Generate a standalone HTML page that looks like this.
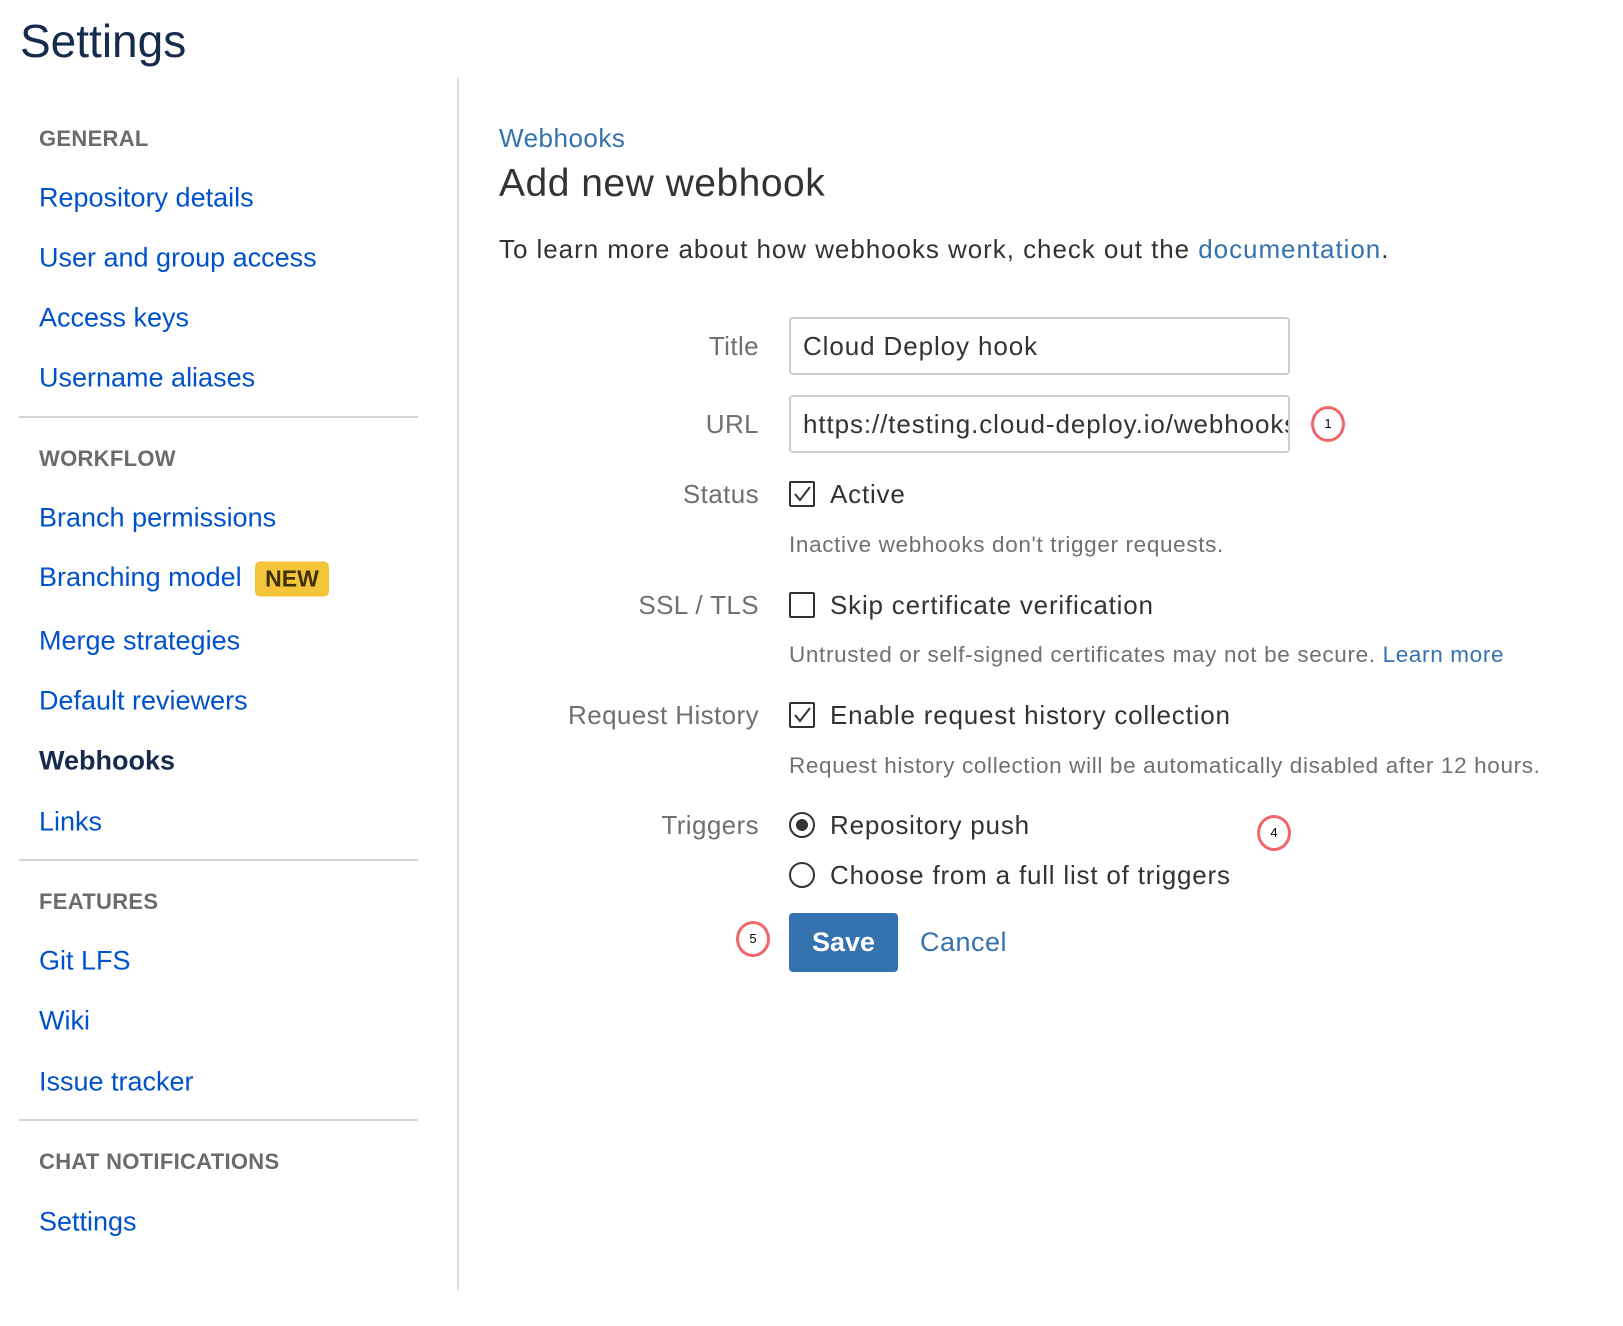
<!DOCTYPE html>
<html><head><meta charset="utf-8"><style>
*{margin:0;padding:0;box-sizing:border-box}
body{width:1623px;height:1326px;background:#fff;font-family:"Liberation Sans",Arial,sans-serif;position:relative;overflow:hidden}
.a{position:absolute;white-space:nowrap;line-height:1}
.h{font-weight:bold;font-size:22px;color:#6b6b6b;left:39px;transform:translateY(-50%);letter-spacing:0.3px}
.l{font-size:27px;color:#0052cc;left:39px;transform:translateY(-50%)}
.hr{position:absolute;left:19px;width:399px;height:2px;background:#d4d4d4}
.lab{right:864px;font-size:26px;color:#707070;transform:translateY(-50%);letter-spacing:0.4px}
.t{font-size:26px;color:#333;transform:translateY(-50%);letter-spacing:0.8px}
.help{left:789px;font-size:22.5px;color:#707070;transform:translateY(-50%);letter-spacing:0.65px}
.inp{position:absolute;left:789px;width:501px;height:58px;border:2px solid #ccc;border-radius:4px;font-size:26px;color:#333;padding-left:12px;line-height:54px;overflow:hidden;white-space:nowrap;letter-spacing:0.9px}
.cb{position:absolute;left:789px;width:26px;height:26px;border:2px solid #333;border-radius:2px}
.rd{position:absolute;left:789px;width:26px;height:26px;border:2px solid #333;border-radius:50%}
.c{position:absolute;width:34px;height:36px;border:3px solid #f0666a;border-radius:50%;font-size:13px;color:#000;text-align:center;line-height:30px}
</style></head><body>
<div class="a" style="left:20px;top:18px;font-size:46px;color:#172b4d">Settings</div>
<div style="position:absolute;left:457px;top:78px;width:2px;height:1212px;background:#ddd"></div>

<div class="a h" style="top:139px">GENERAL</div>
<div class="a l" style="top:198px">Repository details</div>
<div class="a l" style="top:258px">User and group access</div>
<div class="a l" style="top:318px">Access keys</div>
<div class="a l" style="top:378px">Username aliases</div>
<div class="hr" style="top:416px"></div>
<div class="a h" style="top:459px">WORKFLOW</div>
<div class="a l" style="top:518px">Branch permissions</div>
<div class="a l" style="top:579px">Branching model <span style="display:inline-block;background:#f4c53b;color:#403200;font-weight:bold;font-size:23px;padding:6px 10px;border-radius:5px;vertical-align:middle;margin-left:6px">NEW</span></div>
<div class="a l" style="top:641px">Merge strategies</div>
<div class="a l" style="top:701px">Default reviewers</div>
<div class="a l" style="top:761px;color:#172b4d;font-weight:bold">Webhooks</div>
<div class="a l" style="top:822px">Links</div>
<div class="hr" style="top:859px"></div>
<div class="a h" style="top:902px">FEATURES</div>
<div class="a l" style="top:961px">Git LFS</div>
<div class="a l" style="top:1021px">Wiki</div>
<div class="a l" style="top:1082px">Issue tracker</div>
<div class="hr" style="top:1119px"></div>
<div class="a h" style="top:1162px">CHAT NOTIFICATIONS</div>
<div class="a l" style="top:1222px">Settings</div>

<div class="a" style="left:499px;top:125px;font-size:26px;color:#3572b0;letter-spacing:0.5px">Webhooks</div>
<div class="a" style="left:499px;top:164px;font-size:39px;color:#333;letter-spacing:0.5px">Add new webhook</div>
<div class="a" style="left:499px;top:236px;font-size:26px;color:#333;letter-spacing:0.95px">To learn more about how webhooks work, check out the <span style="color:#3572b0">documentation</span>.</div>

<div class="a lab" style="top:346px">Title</div>
<div class="inp" style="top:317px">Cloud Deploy hook</div>
<div class="a lab" style="top:424px">URL</div>
<div class="inp" style="top:395px">https://testing.cloud-deploy.io/webhooks</div>
<div class="c" style="left:1311px;top:406px">1</div>

<div class="a lab" style="top:494px">Status</div>
<div class="cb" style="top:481px"><svg width="22" height="22" style="position:absolute;left:0;top:0"><path d="M4 11 L9 17 L19 4" fill="none" stroke="#333" stroke-width="2"/></svg></div>
<div class="a t" style="left:830px;top:494px">Active</div>
<div class="a help" style="top:545px">Inactive webhooks don't trigger requests.</div>

<div class="a lab" style="top:605px">SSL / TLS</div>
<div class="cb" style="top:592px"></div>
<div class="a t" style="left:830px;top:605px">Skip certificate verification</div>
<div class="a help" style="top:655px">Untrusted or self-signed certificates may not be secure. <span style="color:#3572b0">Learn more</span></div>

<div class="a lab" style="top:715px">Request History</div>
<div class="cb" style="top:702px"><svg width="22" height="22" style="position:absolute;left:0;top:0"><path d="M4 11 L9 17 L19 4" fill="none" stroke="#333" stroke-width="2"/></svg></div>
<div class="a t" style="left:830px;top:715px">Enable request history collection</div>
<div class="a help" style="top:766px">Request history collection will be automatically disabled after 12 hours.</div>

<div class="a lab" style="top:825px">Triggers</div>
<div class="rd" style="top:812px"><div style="position:absolute;left:5px;top:5px;width:12px;height:12px;border-radius:50%;background:#333"></div></div>
<div class="a t" style="left:830px;top:825px">Repository push</div>
<div class="c" style="left:1257px;top:815px">4</div>
<div class="rd" style="top:862px"></div>
<div class="a t" style="left:830px;top:875px">Choose from a full list of triggers</div>

<div class="c" style="left:736px;top:921px">5</div>
<div style="position:absolute;left:789px;top:913px;width:109px;height:59px;background:#3572b0;border-radius:4px;color:#fff;font-weight:bold;font-size:27px;text-align:center;line-height:59px">Save</div>
<div class="a" style="left:920px;top:929px;font-size:27px;color:#3572b0;letter-spacing:0.5px">Cancel</div>
</body></html>
